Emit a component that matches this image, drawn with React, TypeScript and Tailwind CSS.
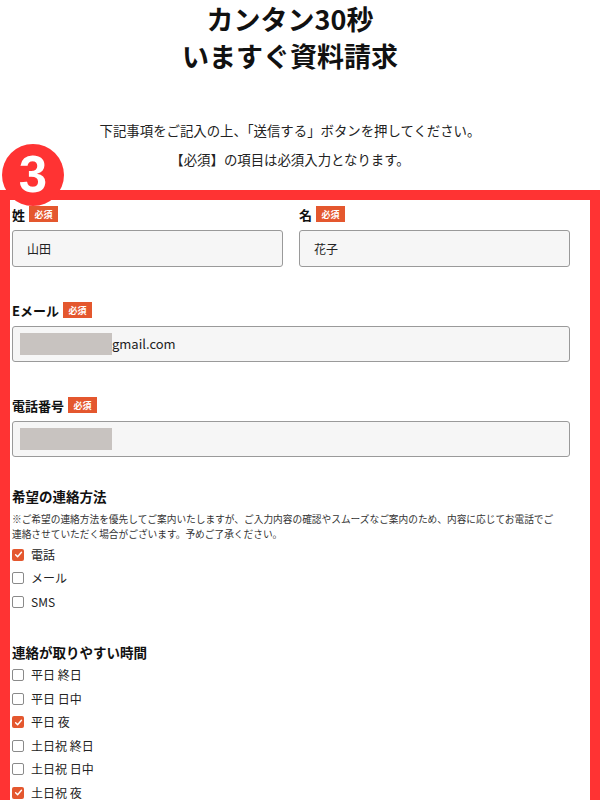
import React from "react";

const Required = () => (
  <span className="inline-flex h-4 w-[29px] items-center justify-center bg-[#e4572e] text-[9px] font-bold leading-none text-white">
    必須
  </span>
);

const FieldLabel = ({ text }: { text: string }) => (
  <div className="flex h-4 items-center gap-1">
    <span className="text-[13px] font-bold leading-none text-[#111]">{text}</span>
    <Required />
  </div>
);

const Redacted = () => <span className="inline-block h-[22px] w-[92px] bg-[#c8c3c0]" />;

const Input = ({ children, h = "h-9" }: { children?: React.ReactNode; h?: string }) => (
  <div
    className={`mt-2 flex ${h} items-center rounded-[3px] border-[1.5px] border-[#9a9a9a] bg-[#f6f6f6] px-[14px] text-[12px] text-[#222]`}
  >
    {children}
  </div>
);

const Check = ({ label, checked }: { label: string; checked?: boolean }) => (
  <div className="flex h-[23.5px] items-center gap-[7px]">
    {checked ? (
      <span className="flex h-3 w-3 items-center justify-center rounded-[2px] bg-[#e4572e]">
        <svg width="9" height="9" viewBox="0 0 10 10">
          <path d="M1.8 5.2 L4 7.4 L8.3 2.6" fill="none" stroke="white" strokeWidth="1.6" strokeLinecap="round" strokeLinejoin="round" />
        </svg>
      </span>
    ) : (
      <span className="h-3 w-3 rounded-[2px] border-[1.5px] border-[#8a8a8a] bg-white" />
    )}
    <span className="text-[12px] leading-none text-[#222]">{label}</span>
  </div>
);

export default function App() {
  return (
    <div className="w-[600px] overflow-hidden bg-white font-['Noto_Sans_CJK_JP',sans-serif] text-[#222]">
      <div className="pr-[20px]">
        <h1 className="text-center text-[27px] font-bold leading-[37px] text-[#111]">
          カンタン30秒
          <br />
          いますぐ資料請求
        </h1>

        <p className="mt-[42px] text-center text-[13.4px] leading-[29px] text-[#222]">
          下記事項をご記入の上、「送信する」ボタンを押してください。
          <br />
          【必須】の項目は必須入力となります。
        </p>
      </div>

      <div className="relative mt-4 border-[10px] border-b-0 border-[#ff3333] pb-6 pl-[2px] pr-[20px] pt-[6px]">
        {/* step number badge */}
        <div className="absolute -left-[8px] -top-[56px] flex h-[62px] w-[62px] items-center justify-center rounded-full bg-[#ff3333]">
          <span className="font-['Liberation_Sans',sans-serif] text-[51px] font-bold leading-[40px] text-white">3</span>
        </div>

        <div className="grid grid-cols-2 gap-x-4">
          <div>
            <FieldLabel text="姓" />
            <Input h="h-[37px]">山田</Input>
          </div>
          <div>
            <FieldLabel text="名" />
            <Input h="h-[37px]">花子</Input>
          </div>
        </div>

        <div className="mt-[35px]">
          <FieldLabel text="Eメール" />
          <Input>
            <span className="-ml-[7px] flex items-center">
              <Redacted />
              <span className="text-[13px]">gmail.com</span>
            </span>
          </Input>
        </div>

        <div className="mt-[35px]">
          <FieldLabel text="電話番号" />
          <Input>
            <span className="-ml-[7px] flex items-center">
              <Redacted />
            </span>
          </Input>
        </div>

        <h2 className="mt-[29px] text-[13.5px] font-bold leading-5 text-[#111]">希望の連絡方法</h2>
        <p className="mt-[6px] text-[9.7px] leading-[15px] text-[#333]">
          ※ご希望の連絡方法を優先してご案内いたしますが、ご入力内容の確認やスムーズなご案内のため、内容に応じてお電話でご
          <br />
          連絡させていただく場合がございます。予めご了承ください。
        </p>
        <div className="mt-px">
          <Check label="電話" checked />
          <Check label="メール" />
          <Check label="SMS" />
        </div>

        <h2 className="mt-[28.5px] text-[13.5px] font-bold leading-5 text-[#111]">連絡が取りやすい時間</h2>
        <div className="mt-[1.5px]">
          <Check label="平日 終日" />
          <Check label="平日 日中" />
          <Check label="平日 夜" checked />
          <Check label="土日祝 終日" />
          <Check label="土日祝 日中" />
          <Check label="土日祝 夜" checked />
        </div>
      </div>
    </div>
  );
}
